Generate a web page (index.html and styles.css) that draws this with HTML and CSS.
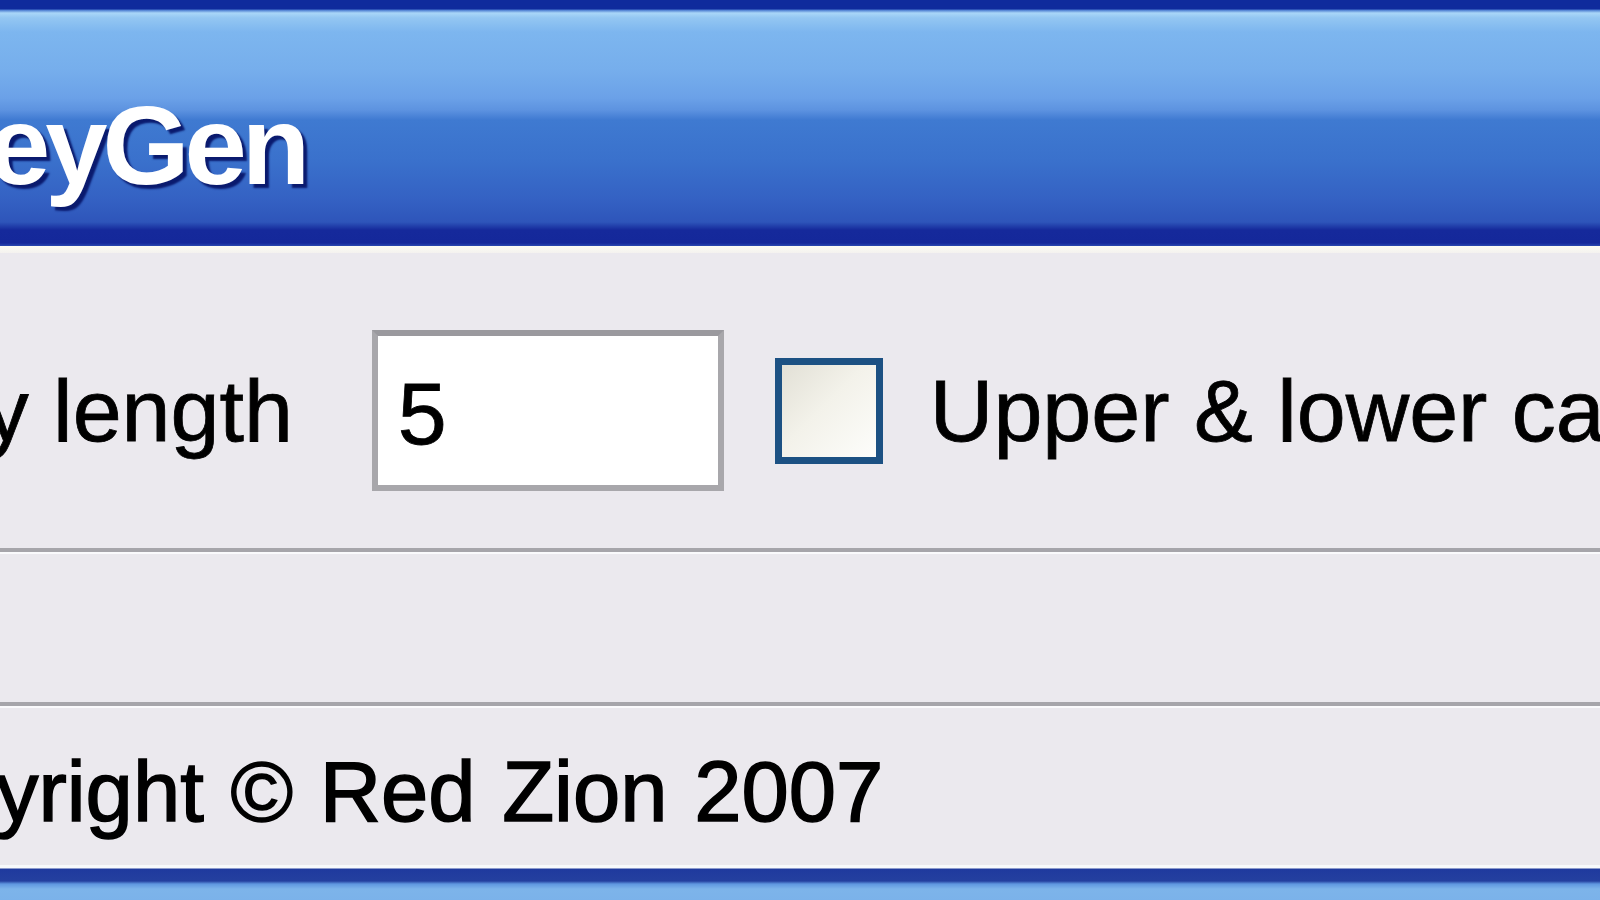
FILE: index.html
```html
<!DOCTYPE html>
<html>
<head>
<meta charset="utf-8">
<title>KeyGen</title>
<link rel="stylesheet" href="styles.css">
</head>
<body>
<div class="window">
  <div class="titlebar"><span class="title">KeyGen</span></div>
  <div class="title-edge"></div>
  <div class="row options">
    <span class="label key-label">Key length</span>
    <div class="textbox">5</div>
    <span class="checkbox"></span>
    <span class="label">Upper &amp; lower case</span>
  </div>
  <div class="separator"></div>
  <div class="row empty"></div>
  <div class="separator"></div>
  <div class="row footer">
    <span class="copyright">Copyright © Red Zion 2007</span>
  </div>
  <div class="bottom-frame"></div>
</div>
</body>
</html>
```
FILE: styles.css
```css
html, body {
  margin: 0;
  padding: 0;
}
body {
  width: 1600px;
  height: 900px;
  overflow: hidden;
  background: #ebe9ee;
  font-family: "Liberation Sans", Arial, sans-serif;
  color: #000;
}
.window {
  display: flex;
  flex-direction: column;
  height: 900px;
  overflow: hidden;
}
.titlebar {
  flex: none;
  height: 246px;
  box-sizing: border-box;
  padding-top: 90px;
  background: linear-gradient(to bottom,
    #0f2b9c 0px, #0f2b9c 9px,
    #4a7ad0 10px, #a9d6f8 13px, #93c6f2 18px,
    #7db6ef 32px, #76aeec 70px, #6ba1e8 98px,
    #5d93e0 110px, #3f7ad1 120px, #3a71cc 160px,
    #3461c3 200px, #2e55ba 222px, #15299b 230px,
    #14289a 243px, #2a48b0 246px);
  white-space: nowrap;
  overflow: hidden;
}
.title {
  display: inline-block;
  margin-left: -88px;
  font-family: "Liberation Sans", Arial, sans-serif;
  font-weight: bold;
  font-size: 112px;
  line-height: 1;
  letter-spacing: -5px;
  color: #fff;
  text-shadow: 4px 4px 2px #0a1a6e;
}
.title-edge {
  flex: none;
  height: 7px;
  background: linear-gradient(to bottom, #fbfbf3, #f4f2ef);
}
.row {
  flex: none;
  display: flex;
  align-items: center;
  white-space: nowrap;
  overflow: hidden;
}
.options {
  height: 295px;
  box-sizing: border-box;
  padding-top: 20px;
}
.label {
  font-size: 88px;
  line-height: 1;
  -webkit-text-stroke: 0.8px #000;
}
.key-label {
  margin-left: -123px;
  margin-right: 79px;
}
.textbox {
  flex: none;
  box-sizing: border-box;
  width: 352px;
  height: 161px;
  border: 6px solid #a8a7ab;
  border-top-color: #9a999e;
  background: #fff;
  font-size: 88px;
  line-height: 1;
  padding: 34px 0 0 20px;
  -webkit-text-stroke: 0.8px #000;
}
.checkbox {
  flex: none;
  box-sizing: border-box;
  width: 108px;
  height: 106px;
  margin-left: 51px;
  margin-right: 47px;
  border: 7px solid #1c5183;
  background: linear-gradient(135deg, #e2e0d6 0%, #f3f2ea 45%, #fdfdfb 100%);
}
.separator {
  flex: none;
  height: 6px;
  box-sizing: border-box;
  border-top: 4px solid #a6a5aa;
  border-bottom: 2px solid #fafafc;
}
.empty {
  height: 148px;
}
.footer {
  height: 157px;
  box-sizing: border-box;
  align-items: flex-start;
  padding-top: 41px;
}
.copyright {
  margin-left: -160px;
  font-size: 85px;
  line-height: 1;
  word-spacing: 3px;
  -webkit-text-stroke: 1.5px #000;
}
.bottom-frame {
  flex: 1;
  background: linear-gradient(to bottom,
    #f7f9fb 0px, #f7f9fb 3px,
    #1f3a9e 4px, #24409f 16px,
    #5f97e0 19px, #7db4ea 24px, #7bb2ea 100%);
}
```
